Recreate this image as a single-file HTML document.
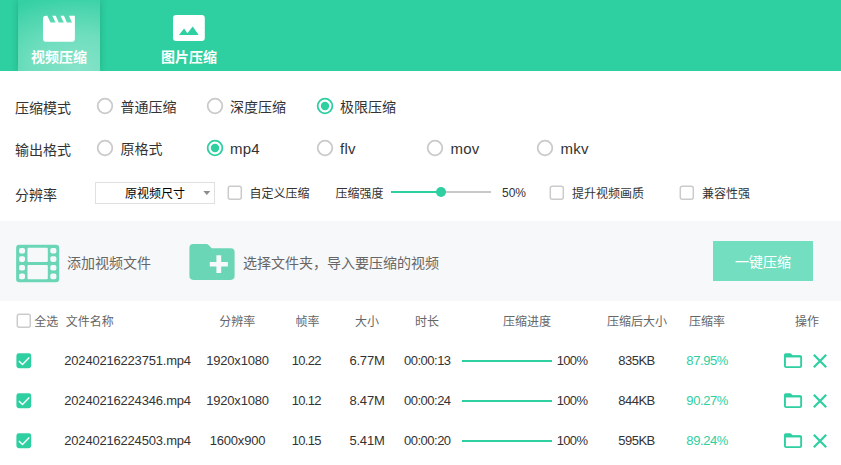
<!DOCTYPE html>
<html lang="zh-CN">
<head>
<meta charset="utf-8">
<title>视频压缩</title>
<style>
*{box-sizing:border-box;margin:0;padding:0}
html,body{width:841px;height:465px;overflow:hidden;background:#fff}
body{position:relative;font-family:"Liberation Sans","Noto Sans CJK SC",sans-serif;color:#333;font-size:14px}
.abs{position:absolute;white-space:nowrap}
.hdr{position:absolute;left:0;top:0;width:841px;height:71px;background:#2ecfa1;overflow:hidden}
.tab{position:absolute;left:18px;top:0;width:82px;height:71px;background:radial-gradient(ellipse 110px 74px at 60px 68px,rgba(255,255,255,.42) 0%,rgba(255,255,255,.31) 45%,rgba(255,255,255,.14) 80%,rgba(255,255,255,.03) 100%);box-shadow:0 0 7px rgba(0,60,40,.22)}
.tabtxt{position:absolute;top:47px;height:20px;line-height:20px;font-size:14px;font-weight:bold;color:#fff;text-align:center;white-space:nowrap}
.lbl{position:absolute;font-size:14px;line-height:20px;height:20px;color:#333;white-space:nowrap}
.opt{position:absolute;font-size:14px;line-height:20px;height:20px;color:#333;white-space:nowrap}
.opt.en{font-size:15px;letter-spacing:.25px}
.radio{position:absolute;width:16px;height:16px}
.cb{position:absolute;width:14px;height:14px}
.s12{position:absolute;font-size:12px;line-height:18px;height:18px;color:#333;white-space:nowrap}
.band{position:absolute;left:0;top:221px;width:841px;height:80px;background:#f7f8fa}
.g14{position:absolute;font-size:14px;line-height:20px;height:20px;color:#666;white-space:nowrap}
.th{position:absolute;top:312.7px;font-size:12px;line-height:18px;height:18px;color:#666;white-space:nowrap;transform:translateX(-50%)}
.td{position:absolute;font-size:13px;line-height:18px;height:18px;color:#333;white-space:nowrap;transform:translateX(-50%);letter-spacing:-0.2px}
.td.l{transform:none}
.td.g{color:#2ecfa1}
.bar{position:absolute;left:462px;width:90px;height:2px;background:#2ecfa1}
.ck{position:absolute;left:16.5px;width:14.6px;height:14.6px;border-radius:2.5px;background:#2ecfa1}
.ck svg{position:absolute;left:0;top:0;width:100%;height:100%}
svg{display:block;overflow:visible}
</style>
</head>
<body>
<div class="hdr">
  <div class="tab"></div>
  <svg class="abs" style="left:0;top:0" width="240" height="71" viewBox="0 0 240 71">
    <!-- clapperboard -->
    <path fill="#fff" d="M43 22.6H74.9V38.4a3.4 3.4 0 0 1-3.4 3.4H46.4a3.4 3.4 0 0 1-3.4-3.4Z"/>
    <path fill="#fff" d="M43 23V18.8a3 3 0 0 1 3-3H47.3L50.8 23Z"/>
    <path fill="#fff" d="M52.3 15.8H55.8L58.9 23H55.8Z"/>
    <path fill="#fff" d="M60.5 15.8H64L67 23H64Z"/>
    <path fill="#fff" d="M69 15.8H74.9V23H72.1Z"/>
    <!-- image icon -->
    <path fill="#fff" fill-rule="evenodd" d="M176 15H201.8a3 3 0 0 1 3 3V38a3 3 0 0 1-3 3H176a3 3 0 0 1-3-3V18a3 3 0 0 1 3-3ZM179 35.1H198.7L192.7 26.6L187.4 33.2L184.1 28.6Z"/>
  </svg>
  <div class="tabtxt" style="left:19px;width:80px">视频压缩</div>
  <div class="tabtxt" style="left:149px;width:80px">图片压缩</div>
</div>

<!-- row 1 -->
<div class="lbl" style="left:15px;top:98px">压缩模式</div>
<svg class="radio" style="left:97px;top:98.2px" viewBox="0 0 16 16"><circle cx="8" cy="8" r="7.3" fill="#fff" stroke="#cacaca" stroke-width="1.8"/></svg><div class="opt" style="left:120.5px;top:97px">普通压缩</div>
<svg class="radio" style="left:207px;top:98.2px" viewBox="0 0 16 16"><circle cx="8" cy="8" r="7.3" fill="#fff" stroke="#cacaca" stroke-width="1.8"/></svg><div class="opt" style="left:230px;top:97px">深度压缩</div>
<svg class="radio" style="left:317px;top:98.2px" viewBox="0 0 16 16"><circle cx="8" cy="8" r="7.35" fill="#fff" stroke="#2ecfa1" stroke-width="1.8"/><circle cx="8" cy="8" r="4.2" fill="#2ecfa1"/></svg><div class="opt" style="left:340px;top:97px">极限压缩</div>

<!-- row 2 -->
<div class="lbl" style="left:15px;top:140px">输出格式</div>
<svg class="radio" style="left:97px;top:140px" viewBox="0 0 16 16"><circle cx="8" cy="8" r="7.3" fill="#fff" stroke="#cacaca" stroke-width="1.8"/></svg><div class="opt" style="left:120.5px;top:138.5px">原格式</div>
<svg class="radio" style="left:207px;top:140px" viewBox="0 0 16 16"><circle cx="8" cy="8" r="7.35" fill="#fff" stroke="#2ecfa1" stroke-width="1.8"/><circle cx="8" cy="8" r="4.2" fill="#2ecfa1"/></svg><div class="opt en" style="left:230px;top:138.5px">mp4</div>
<svg class="radio" style="left:317px;top:140px" viewBox="0 0 16 16"><circle cx="8" cy="8" r="7.3" fill="#fff" stroke="#cacaca" stroke-width="1.8"/></svg><div class="opt en" style="left:340px;top:138.5px">flv</div>
<svg class="radio" style="left:427px;top:140px" viewBox="0 0 16 16"><circle cx="8" cy="8" r="7.3" fill="#fff" stroke="#cacaca" stroke-width="1.8"/></svg><div class="opt en" style="left:450.5px;top:138.5px">mov</div>
<svg class="radio" style="left:537px;top:140px" viewBox="0 0 16 16"><circle cx="8" cy="8" r="7.3" fill="#fff" stroke="#cacaca" stroke-width="1.8"/></svg><div class="opt en" style="left:560.5px;top:138.5px">mkv</div>

<!-- row 3 -->
<div class="lbl" style="left:15px;top:185px">分辨率</div>
<div class="abs" style="left:95px;top:182px;width:120px;height:22px;border:1px solid #e0e0e0;background:#fff"></div>
<div class="s12" style="left:125px;top:185px;color:#000">原视频尺寸</div>
<svg class="abs" style="left:203px;top:191px" width="8" height="4" viewBox="0 0 8 4"><path fill="#8c8c8c" d="M0.3 0H7.3L3.8 4Z"/></svg>
<svg class="cb" style="left:228px;top:185.5px" viewBox="0 0 14 14"><rect x=".3" y=".35" width="13" height="12.9" rx="2" fill="#fff" stroke="#cbcbcb" stroke-width="1.5"/></svg><div class="s12" style="left:249.5px;top:185px">自定义压缩</div>
<div class="s12" style="left:335.5px;top:185px">压缩强度</div>
<div class="abs" style="left:391px;top:191px;width:100px;height:2px;background:#c9c9c9"></div>
<div class="abs" style="left:391px;top:191px;width:50px;height:2px;background:#2ecfa1"></div>
<div class="abs" style="left:435.5px;top:186.7px;width:10.6px;height:10.6px;border-radius:50%;background:#2ecfa1"></div>
<div class="s12" style="left:502px;top:184px">50%</div>
<svg class="cb" style="left:550px;top:185.5px" viewBox="0 0 14 14"><rect x=".3" y=".35" width="13" height="12.9" rx="2" fill="#fff" stroke="#cbcbcb" stroke-width="1.5"/></svg><div class="s12" style="left:572px;top:185px">提升视频画质</div>
<svg class="cb" style="left:680px;top:185.5px" viewBox="0 0 14 14"><rect x=".3" y=".35" width="13" height="12.9" rx="2" fill="#fff" stroke="#cbcbcb" stroke-width="1.5"/></svg><div class="s12" style="left:702px;top:185px">兼容性强</div>

<!-- toolbar band -->
<div class="band"></div>
<svg class="abs" style="left:0;top:221px" width="260" height="80" viewBox="0 221 260 80">
  <!-- film icon -->
  <path fill="#6bd6b5" fill-rule="evenodd" d="M19.30 244.70h36.70a3.2 3.2 0 0 1 3.2 3.2v31.20a3.2 3.2 0 0 1 -3.2 3.2h-36.70a3.2 3.2 0 0 1 -3.2 -3.2v-31.20a3.2 3.2 0 0 1 3.2 -3.2Z
   M28.50 247.70h18.30a1 1 0 0 1 1 1v12.20a1 1 0 0 1 -1 1h-18.30a1 1 0 0 1 -1 -1v-12.20a1 1 0 0 1 1 -1Z
   M28.50 264.90h18.30a1 1 0 0 1 1 1v12.30a1 1 0 0 1 -1 1h-18.30a1 1 0 0 1 -1 -1v-12.30a1 1 0 0 1 1 -1Z
   M20.90 247.90h2.30a1.8 1.8 0 0 1 1.8 1.8v2.10a1.8 1.8 0 0 1 -1.8 1.8h-2.30a1.8 1.8 0 0 1 -1.8 -1.8v-2.10a1.8 1.8 0 0 1 1.8 -1.8Z
   M20.90 256.30h2.30a1.8 1.8 0 0 1 1.8 1.8v2.00a1.8 1.8 0 0 1 -1.8 1.8h-2.30a1.8 1.8 0 0 1 -1.8 -1.8v-2.00a1.8 1.8 0 0 1 1.8 -1.8Z
   M20.90 265.10h2.30a1.8 1.8 0 0 1 1.8 1.8v1.90a1.8 1.8 0 0 1 -1.8 1.8h-2.30a1.8 1.8 0 0 1 -1.8 -1.8v-1.90a1.8 1.8 0 0 1 1.8 -1.8Z
   M20.90 273.50h2.30a1.8 1.8 0 0 1 1.8 1.8v2.10a1.8 1.8 0 0 1 -1.8 1.8h-2.30a1.8 1.8 0 0 1 -1.8 -1.8v-2.10a1.8 1.8 0 0 1 1.8 -1.8Z
   M52.10 247.90h2.50a1.8 1.8 0 0 1 1.8 1.8v2.10a1.8 1.8 0 0 1 -1.8 1.8h-2.50a1.8 1.8 0 0 1 -1.8 -1.8v-2.10a1.8 1.8 0 0 1 1.8 -1.8Z
   M52.10 256.30h2.50a1.8 1.8 0 0 1 1.8 1.8v2.00a1.8 1.8 0 0 1 -1.8 1.8h-2.50a1.8 1.8 0 0 1 -1.8 -1.8v-2.00a1.8 1.8 0 0 1 1.8 -1.8Z
   M52.10 265.10h2.50a1.8 1.8 0 0 1 1.8 1.8v1.90a1.8 1.8 0 0 1 -1.8 1.8h-2.50a1.8 1.8 0 0 1 -1.8 -1.8v-1.90a1.8 1.8 0 0 1 1.8 -1.8Z
   M52.10 273.50h2.50a1.8 1.8 0 0 1 1.8 1.8v2.10a1.8 1.8 0 0 1 -1.8 1.8h-2.50a1.8 1.8 0 0 1 -1.8 -1.8v-2.10a1.8 1.8 0 0 1 1.8 -1.8Z"/>
  <!-- folder plus -->
  <path fill="#6bd6b5" d="M193.2 243.9H206.4a3 3 0 0 1 2.2 1L211.7 248.2H230.8a3.8 3.8 0 0 1 3.8 3.8V276.1a3.8 3.8 0 0 1-3.8 3.8H193.2a3.8 3.8 0 0 1-3.8-3.8V247.7a3.8 3.8 0 0 1 3.8-3.8Z"/>
  <path fill="#f7f8fa" d="M216.4 255.3h4.8v6.6h6.7v4.7h-6.7v6.5h-4.8v-6.5h-6.6v-4.7h6.6Z"/>
</svg>
<div class="g14" style="left:67px;top:253px">添加视频文件</div>
<div class="g14" style="left:243px;top:253px">选择文件夹，导入要压缩的视频</div>
<div class="abs" style="left:713px;top:241px;width:100px;height:40px;background:#74dfc0;color:#fff;font-size:14px;line-height:42px;text-align:center">一键压缩</div>

<!-- table header -->
<svg class="cb" style="left:17px;top:314px" viewBox="0 0 14 14"><rect x=".3" y=".35" width="13" height="12.9" rx="2" fill="#fff" stroke="#cbcbcb" stroke-width="1.5"/></svg>
<div class="th" style="left:34.3px;transform:none">全选</div>
<div class="th" style="left:65.7px;transform:none">文件名称</div>
<div class="th" style="left:237.3px">分辨率</div>
<div class="th" style="left:307.5px">帧率</div>
<div class="th" style="left:367px">大小</div>
<div class="th" style="left:427px">时长</div>
<div class="th" style="left:527px">压缩进度</div>
<div class="th" style="left:637px">压缩后大小</div>
<div class="th" style="left:707px">压缩率</div>
<div class="th" style="left:807px">操作</div>

<!-- rows -->
<svg class="abs" style="left:10px;top:350.0px" width="30" height="22" viewBox="10 350.0 30 22"><rect x="16.4" y="353.3" width="14.8" height="14.9" rx="2.4" fill="#2ecfa1"/><path d="M18.9 361.0L22.5 364.4L29.3 357.6" fill="none" stroke="#fff" stroke-width="1.4"/></svg>
<div class="td l" style="left:64.3px;top:351.5px">20240216223751.mp4</div>
<div class="td" style="left:237.5px;top:351.5px">1920x1080</div>
<div class="td" style="left:306.3px;top:351.5px;letter-spacing:-.7px">10.22</div>
<div class="td" style="left:367px;top:351.5px">6.77M</div>
<div class="td" style="left:427.3px;top:351.5px;letter-spacing:-.5px">00:00:13</div>
<div class="bar" style="top:360px"></div>
<div class="td l" style="left:556.8px;top:351.5px;letter-spacing:-.7px">100%</div>
<div class="td" style="left:636.5px;top:351.5px;letter-spacing:-.5px">835KB</div>
<div class="td g" style="left:707.2px;top:351.5px;letter-spacing:-.4px">87.95%</div>

<svg class="abs" style="left:10px;top:390.0px" width="30" height="22" viewBox="10 390.0 30 22"><rect x="16.4" y="393.3" width="14.8" height="14.9" rx="2.4" fill="#2ecfa1"/><path d="M18.9 401.0L22.5 404.4L29.3 397.6" fill="none" stroke="#fff" stroke-width="1.4"/></svg>
<div class="td l" style="left:64.3px;top:391.5px">20240216224346.mp4</div>
<div class="td" style="left:237.5px;top:391.5px">1920x1080</div>
<div class="td" style="left:306.3px;top:391.5px;letter-spacing:-.7px">10.12</div>
<div class="td" style="left:367px;top:391.5px">8.47M</div>
<div class="td" style="left:427.3px;top:391.5px;letter-spacing:-.5px">00:00:24</div>
<div class="bar" style="top:400px"></div>
<div class="td l" style="left:556.8px;top:391.5px;letter-spacing:-.7px">100%</div>
<div class="td" style="left:636.5px;top:391.5px;letter-spacing:-.5px">844KB</div>
<div class="td g" style="left:707.2px;top:391.5px;letter-spacing:-.4px">90.27%</div>

<svg class="abs" style="left:10px;top:430.0px" width="30" height="22" viewBox="10 430.0 30 22"><rect x="16.4" y="433.3" width="14.8" height="14.9" rx="2.4" fill="#2ecfa1"/><path d="M18.9 441.0L22.5 444.4L29.3 437.6" fill="none" stroke="#fff" stroke-width="1.4"/></svg>
<div class="td l" style="left:64.3px;top:431.5px">20240216224503.mp4</div>
<div class="td" style="left:237.5px;top:431.5px">1600x900</div>
<div class="td" style="left:306.3px;top:431.5px;letter-spacing:-.7px">10.15</div>
<div class="td" style="left:367px;top:431.5px">5.41M</div>
<div class="td" style="left:427.3px;top:431.5px;letter-spacing:-.5px">00:00:20</div>
<div class="bar" style="top:440px"></div>
<div class="td l" style="left:556.8px;top:431.5px;letter-spacing:-.7px">100%</div>
<div class="td" style="left:636.5px;top:431.5px;letter-spacing:-.5px">595KB</div>
<div class="td g" style="left:707.2px;top:431.5px;letter-spacing:-.4px">89.24%</div>

<!-- action icons -->
<svg class="abs" style="left:780px;top:340px" width="61" height="125" viewBox="780 340 61 125">
  <g fill="none" stroke="#2ecfa1" transform="translate(0 0)">
    <rect x="784.95" y="356.2" width="16.2" height="10.95" rx="1.2" stroke-width="1.9"/>
    <path fill="#2ecfa1" stroke="none" d="M784 354.9a1.6 1.6 0 0 1 1.6-1.6H790a1.6 1.6 0 0 1 1.2 .5L792.6 355.5H800.4a1.7 1.7 0 0 1 1.7 1.7V357.2H784Z"/>
    <path stroke-width="2.2" d="M813.8 354.8L826.2 367.2M826.2 354.8L813.8 367.2"/>
  </g>
  <g fill="none" stroke="#2ecfa1" transform="translate(0 40)">
    <rect x="784.95" y="356.2" width="16.2" height="10.95" rx="1.2" stroke-width="1.9"/>
    <path fill="#2ecfa1" stroke="none" d="M784 354.9a1.6 1.6 0 0 1 1.6-1.6H790a1.6 1.6 0 0 1 1.2 .5L792.6 355.5H800.4a1.7 1.7 0 0 1 1.7 1.7V357.2H784Z"/>
    <path stroke-width="2.2" d="M813.8 354.8L826.2 367.2M826.2 354.8L813.8 367.2"/>
  </g>
  <g fill="none" stroke="#2ecfa1" transform="translate(0 80)">
    <rect x="784.95" y="356.2" width="16.2" height="10.95" rx="1.2" stroke-width="1.9"/>
    <path fill="#2ecfa1" stroke="none" d="M784 354.9a1.6 1.6 0 0 1 1.6-1.6H790a1.6 1.6 0 0 1 1.2 .5L792.6 355.5H800.4a1.7 1.7 0 0 1 1.7 1.7V357.2H784Z"/>
    <path stroke-width="2.2" d="M813.8 354.8L826.2 367.2M826.2 354.8L813.8 367.2"/>
  </g>
</svg>
</body>
</html>
